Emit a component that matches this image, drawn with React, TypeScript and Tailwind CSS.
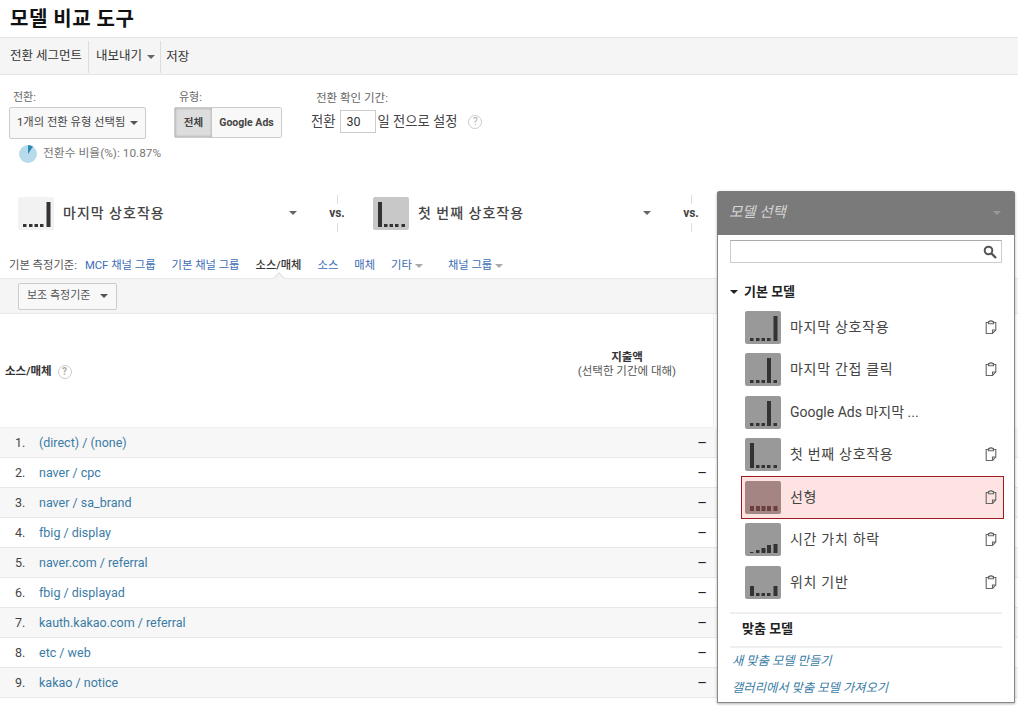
const font = "font-['Roboto','Noto_Sans_CJK_KR',sans-serif]";

const rows = [
    '(direct) / (none)',
    'naver / cpc',
    'naver / sa_brand',
    'fbig / display',
    'naver.com / referral',
    'fbig / displayad',
    'kauth.kakao.com / referral',
    'etc / web',
    'kakao / notice',
];

// bar heights for each attribution model, left to right
const lastBars = [3, 3, 3, 3, 25];
const firstBars = [25, 3, 3, 3, 3];
const indirectBars = [3, 3, 3, 25, 3];
const linearBars = [5, 5, 5, 5, 5];
const decayBars = [1, 3, 5, 8, 9];
const positionBars = [10, 3, 3, 3, 10];

const barX = [5, 11, 16.5, 22, 28.5];

const models = [
    { name: '마지막 상호작용', bars: lastBars, copy: true },
    { name: '마지막 간접 클릭', bars: indirectBars, copy: true },
    { name: 'Google Ads 마지막 ...', bars: indirectBars, copy: false },
    { name: '첫 번째 상호작용', bars: firstBars, copy: true },
    { name: '선형', bars: linearBars, copy: true, selected: true },
    { name: '시간 가치 하락', bars: decayBars, copy: true },
    { name: '위치 기반', bars: positionBars, copy: true },
];

function Caret({ className = 'border-t-[#666]' }: { className?: string }) {
    return <span className={`inline-block w-0 h-0 border-x-[4px] border-x-transparent border-t-[4px] ${className}`} />;
}

function ModelIcon({ bars, bg = '#999999', fill = '#333333' }: { bars: number[]; bg?: string; fill?: string }) {
    return (
        <svg width="36" height="33" viewBox="0 0 36 33" className="shrink-0">
            <rect width="36" height="33" rx="2" fill={bg} />
            {bars.map((h, i) => (
                <rect key={i} x={barX[i]} y={30 - h} width={h > 4 ? 4 : 3.5} height={h} fill={fill} />
            ))}
        </svg>
    );
}

function Help() {
    return (
        <span className="inline-flex w-[14px] h-[14px] items-center justify-center rounded-full border border-[#ccc] text-[10px] leading-none text-[#aaa]">?</span>
    );
}

function Vs() {
    return (
        <div className="w-[76px] pl-[4px] flex flex-col items-center text-[12px] font-bold text-[#444] leading-[13px]">
            <span className="h-[9px] border-l border-[#ddd]" />
            <span className="py-[3px]">vs.</span>
            <span className="h-[9px] border-l border-[#ddd]" />
        </div>
    );
}

function CopyIcon() {
    return (
        <svg width="12" height="15" viewBox="0 0 12 15" fill="none" stroke="#666" strokeWidth="1.1" className="shrink-0">
            <path d="M3.5 2.5H1.2v11h6.3l3.3-3.5V2.5H8.5" />
            <path d="M3.5 3.8V1.6h1.5V.8h2v.8h1.5v2.2z" fill="#fff" />
            <path d="M7.5 13.5V10h3.3" />
        </svg>
    );
}

export default function App() {
    return (
        <div className={`${font} relative w-[1018px] h-[706px] overflow-hidden bg-white text-[#333]`}>
            <h1 className="h-[37px] pl-[10px] pt-[5px] text-[20px] leading-[28px] font-bold text-[#111] tracking-[0.5px]">모델 비교 도구</h1>

            <div className="h-[38px] flex items-center pt-[1px] bg-[#f5f5f5] border-y border-[#e5e5e5] text-[12.5px] text-[#333]">
                <span className="pl-[10px] pr-[6px]">전환 세그먼트</span>
                <span className="flex items-center gap-[5px] h-[32px] border-l border-[#ddd] pl-[7px] pr-[5px]">내보내기 <Caret /></span>
                <span className="h-[32px] leading-[32px] border-l border-[#ddd] pl-[5px]">저장</span>
            </div>

            <div className="flex h-[121px] pl-[9px] pt-[15px]">
                <div className="w-[165px]">
                    <div className="pl-[4px] text-[11px] leading-[16px] text-[#666]">전환:</div>
                    <div className="mt-[1px] w-[137px] h-[32px] flex items-center justify-between px-[7px] rounded-[2px] border border-[#ccc] bg-[#f8f8f8] text-[11.3px] text-[#444]">
                        1개의 전환 유형 선택됨 <Caret className="border-t-[#555]" />
                    </div>
                    <div className="flex items-center gap-[5px] ml-[9px] mt-[5px] text-[11.8px] text-[#777]">
                        <svg width="20" height="20" viewBox="0 0 20 20">
                            <circle cx="10" cy="10" r="9" fill="#b7dbea" />
                            <path d="M10 10V1a9 9 0 0 1 5 1.5z" fill="#2c87b5" />
                        </svg>
                        전환수 비율(%): 10.87%
                    </div>
                </div>
                <div className="w-[132px]">
                    <div className="pl-[5px] text-[11px] leading-[16px] text-[#666]">유형:</div>
                    <div className="mt-[1px] flex w-[108px] h-[31px] rounded-[2px] border border-[#ccc] text-[10.5px] font-bold text-[#444]">
                        <span className="w-[37px] flex items-center justify-center bg-[#ddd] shadow-[inset_0_0_3px_#999]">전체</span>
                        <span className="flex-1 flex items-center justify-center bg-[#f8f8f8]">Google Ads</span>
                    </div>
                </div>
                <div>
                    <div className="pl-[10px] text-[11.5px] leading-[16px] text-[#666]">전환 확인 기간:</div>
                    <div className="flex items-center mt-[4px] pl-[5px] text-[13.3px] text-[#444]">
                        전환
                        <span className="ml-[5px] mr-[1px] w-[36px] h-[23px] pl-[5px] leading-[21px] text-[12.5px] border border-[#ccc] text-[#333]">30</span>
                        일 전으로 설정
                        <span className="ml-[11px] mb-[2px]"><Help /></span>
                    </div>
                </div>
            </div>

            <div className="flex items-center h-[34px] pl-[18px]">
                <ModelIcon bars={lastBars} bg="#f2f2f2" />
                <span className="ml-[9px] w-[226px] text-[14px] font-medium text-[#444] tracking-[1px]">마지막 상호작용</span>
                <Caret />
                <Vs />
                <ModelIcon bars={firstBars} bg="#c8c8c8" />
                <span className="ml-[9px] w-[225px] text-[14px] font-medium text-[#444] tracking-[1px]">첫 번째 상호작용</span>
                <Caret />
                <Vs />
            </div>

            <div className="flex items-center h-[26px] mt-[22px] pl-[9px] pt-[2px] text-[11.3px] text-[#3b6cb5]">
                <span className="text-[#555] mr-[8px]">기본 측정기준:</span>
                <span className="mr-[16px]">MCF 채널 그룹</span>
                <span className="mr-[16px]">기본 채널 그룹</span>
                <span className="mr-[16px] font-medium text-[#333]">소스/매체</span>
                <span className="mr-[16px]">소스</span>
                <span className="mr-[16px]">매체</span>
                <span className="flex items-center gap-[3px] mr-[25px]">기타 <Caret className="border-t-[#aaa]" /></span>
                <span className="flex items-center gap-[3px]">채널 그룹 <Caret className="border-t-[#aaa]" /></span>
            </div>

            <div className="relative h-[36px] flex items-center pl-[18px] bg-[#f5f5f5] border-y border-[#e8e8e8]">
                {/* little notch under the active dimension */}
                <span className="absolute left-[275px] -top-[5px] w-[8px] h-[8px] rotate-45 bg-[#f5f5f5] border-l border-t border-[#e0e0e0]" />
                <div className="w-[99px] h-[27px] flex items-center justify-between px-[8px] rounded-[2px] border border-[#ccc] bg-[#f8f8f8] text-[11px] text-[#555]">
                    보조 측정기준 <Caret className="border-t-[#555]" />
                </div>
            </div>

            <div className="flex items-center h-[114px] w-[714px] border-b border-r border-[#eee]">
                <span className="pl-[5px] pt-[2px] flex items-center gap-[6px] text-[11.5px] font-bold text-[#333]">소스/매체 <Help /></span>
                <div className="ml-auto w-[172px] pb-[14px] text-center text-[11.5px] leading-[14px] text-[#555]">
                    <div className="font-bold text-[#333]">지출액</div>
                    (선택한 기간에 대해)
                </div>
            </div>

            {rows.map((row, i) => (
                <div key={row} className={`flex items-center h-[30px] pt-[1px] border-b border-[#e8e8e8] text-[12.5px] ${i % 2 === 0 ? 'bg-[#f7f7f7]' : 'bg-white'}`}>
                    <span className="w-[39px] pl-[15px] text-[#444]">{i + 1}.</span>
                    <span className="text-[#3a7ca5]">{row}</span>
                    <span className="ml-auto mr-[311px] text-[15px] text-[#222]">–</span>
                </div>
            ))}

            <div className="absolute left-[717px] top-[191px] w-[298px] h-[512px] rounded-t-[3px] border border-[#888] border-t-0 bg-white shadow-[0_1px_3px_rgba(0,0,0,0.3)]">
                <div className="-mx-px h-[44px] flex items-center justify-between pl-[12px] pr-[14px] rounded-t-[3px] bg-[#7a7a7a] text-[14.5px] italic text-[#d4d4d4]">
                    모델 선택
                    <Caret className="border-t-[#999]" />
                </div>
                <div className="mx-[12px] mt-[5px] h-[23px] flex items-center justify-end pr-[4px] border border-[#ccc] border-t-[#aaa]">
                    <svg width="14" height="14" viewBox="0 0 14 14" fill="none" stroke="#555" strokeWidth="2">
                        <circle cx="5.5" cy="5.5" r="3.8" />
                        <path d="M8.5 8.5l4.5 4.5" strokeWidth="2.4" />
                    </svg>
                </div>
                <div className="flex items-center gap-[6px] ml-[12px] mt-[19px] h-[20px] text-[13px] font-bold text-[#222]">
                    <Caret className="border-t-[#222]" />
                    기본 모델
                </div>
                <div className="mt-[4px]">
                    {models.map((model) => (
                        <div
                            key={model.name}
                            className={`relative flex items-center h-[42.5px] pl-[27px] pr-[17px] text-[14px] text-[#444] ${model.copy ? 'tracking-[0.7px]' : 'tracking-normal'} ${model.selected ? 'z-10' : ''}`}
                        >
                            {model.selected && (
                                <span className="absolute left-[23px] right-[10px] top-0 h-[43px] border border-[#9c1c1f] bg-[#fde3e1]" />
                            )}
                            <span className="relative flex items-center w-full">
                                {model.selected ? (
                                    <ModelIcon bars={model.bars} bg="#a58583" fill="#693f3f" />
                                ) : (
                                    <ModelIcon bars={model.bars} />
                                )}
                                <span className="ml-[9px]">{model.name}</span>
                                {model.copy && <span className="ml-auto"><CopyIcon /></span>}
                            </span>
                        </div>
                    ))}
                </div>
                <div className="mx-[12px] mt-[8px] h-[36px] pl-[12px] leading-[29px] border-y-2 border-y-[#eee] text-[13px] font-bold text-[#222]">맞춤 모델</div>
                <div className="ml-[14px] text-[12.3px] italic leading-[27px] text-[#3a7ca5]">
                    <div>새 맞춤 모델 만들기</div>
                    <div>갤러리에서 맞춤 모델 가져오기</div>
                </div>
            </div>
        </div>
    );
}
